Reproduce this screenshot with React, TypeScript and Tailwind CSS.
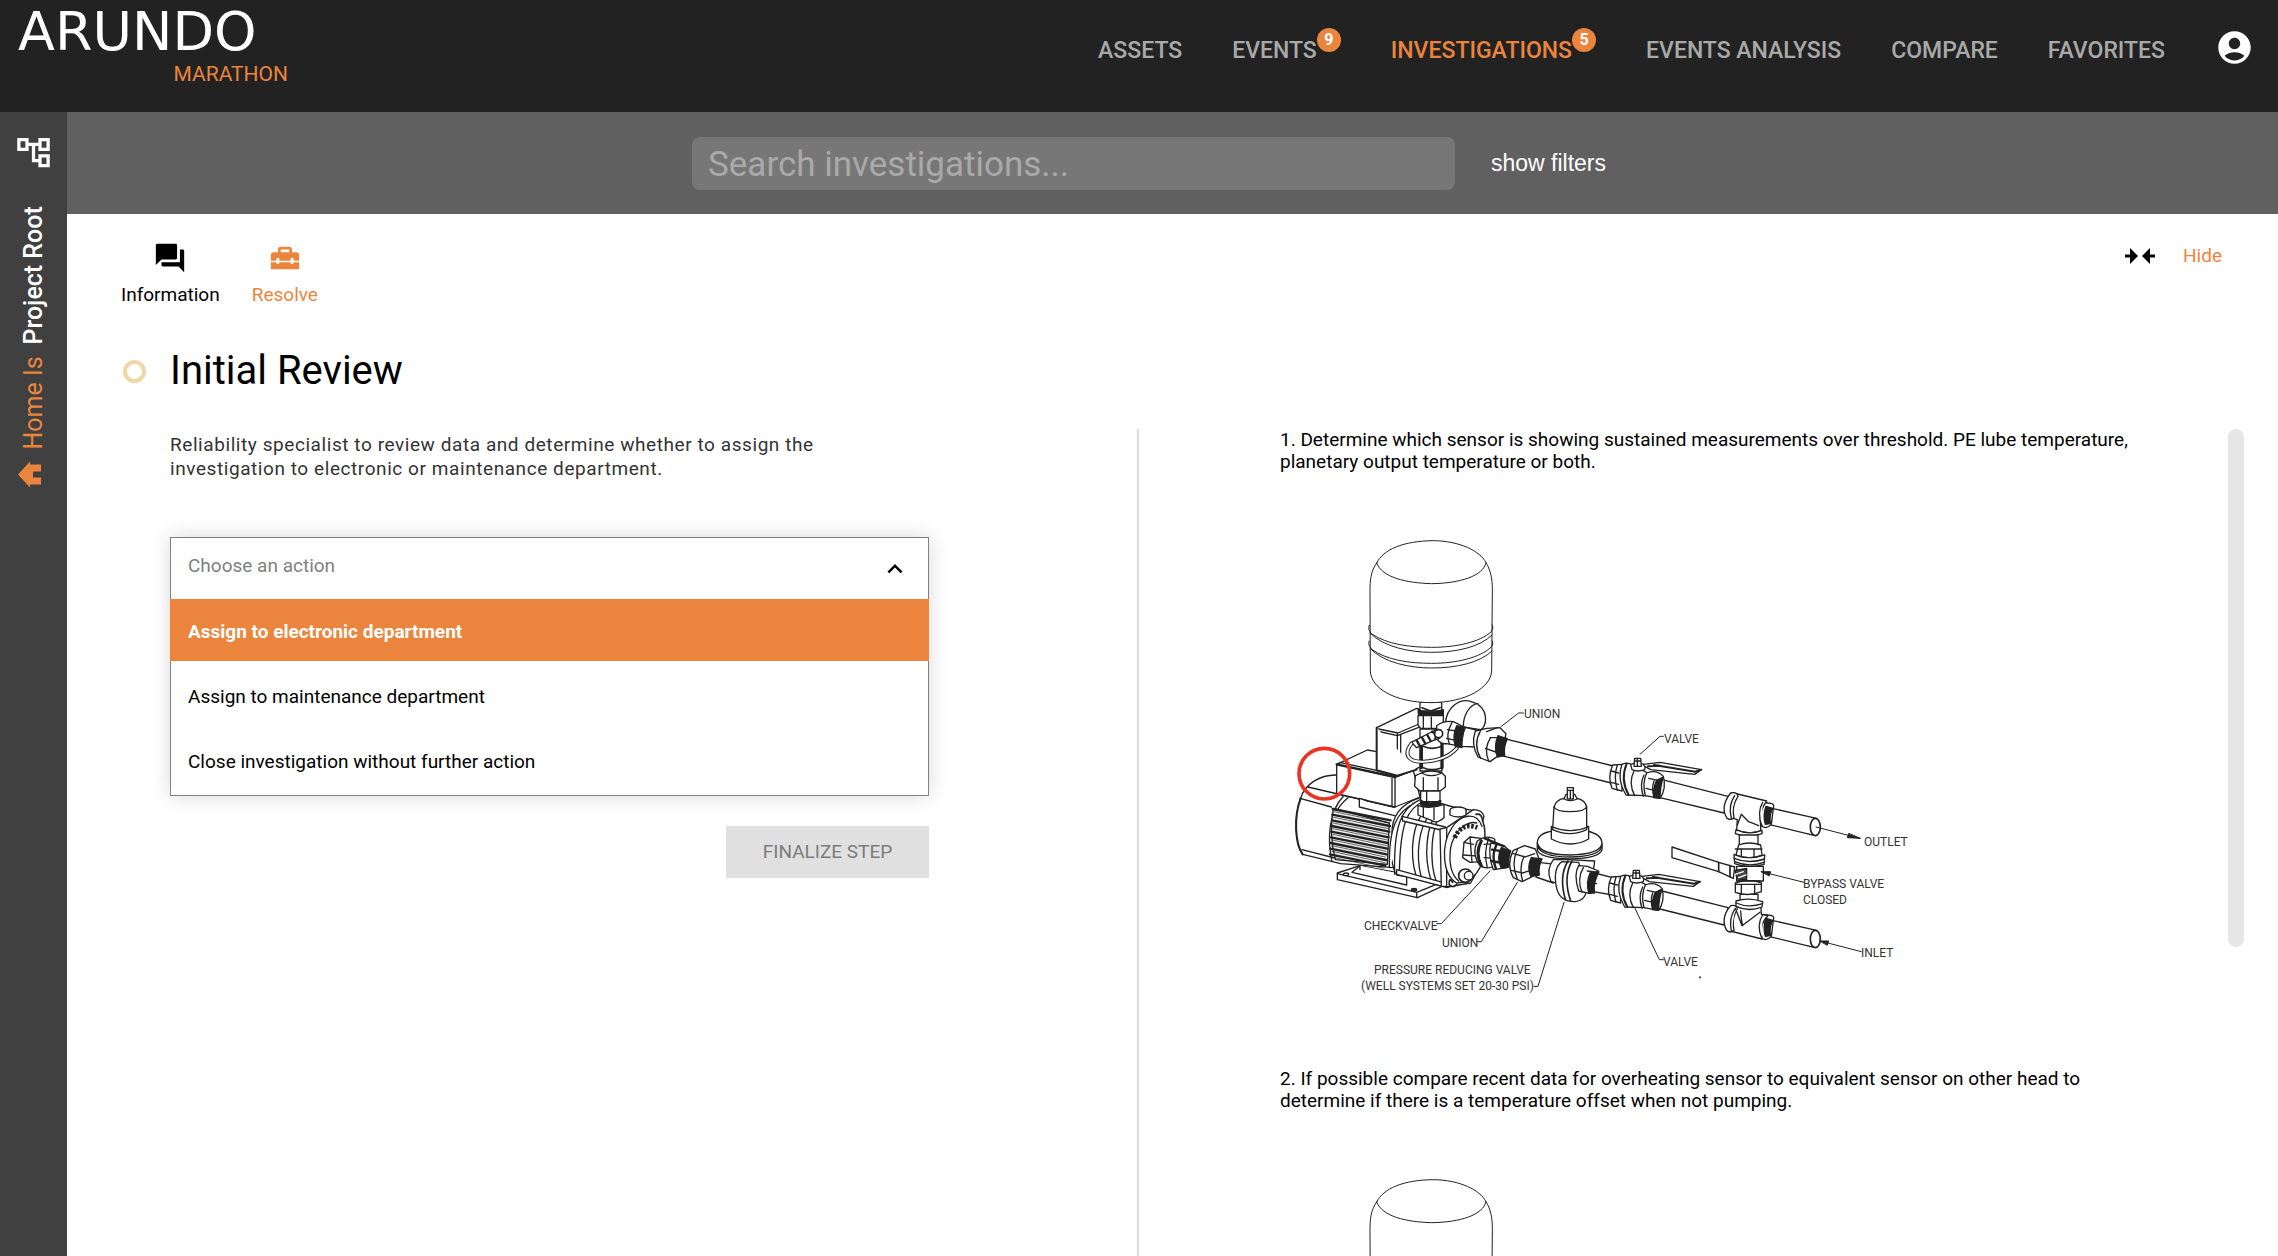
import React, { useState } from "react";
import {
  MdAccountCircle,
  MdForum,
  MdHomeRepairService,
  MdKeyboardArrowUp,
  MdOutlineAccountTree,
} from "react-icons/md";

type NavItem = {
  label: string;
  badge?: number;
  active?: boolean;
};

const navItems: NavItem[] = [
  { label: "ASSETS" },
  { label: "EVENTS", badge: 9 },
  { label: "INVESTIGATIONS", badge: 5, active: true },
  { label: "EVENTS ANALYSIS" },
  { label: "COMPARE" },
  { label: "FAVORITES" },
];

const actions = [
  "Assign to electronic department",
  "Assign to maintenance department",
  "Close investigation without further action",
];

const instructions = [
  {
    text: "1. Determine which sensor is showing sustained measurements over threshold. PE lube temperature, planetary output temperature or both.",
    labelled: true,
  },
  {
    text: "2. If possible compare recent data for overheating sensor to equivalent sensor on other head to determine if there is a temperature offset when not pumping.",
    labelled: false,
  },
];

const labels = [
  { x: 244, y: 197, text: "UNION" },
  { x: 384, y: 222, text: "VALVE" },
  { x: 584, y: 325, text: "OUTLET" },
  { x: 523, y: 367, text: "BYPASS VALVE" },
  { x: 523, y: 383, text: "CLOSED" },
  { x: 581, y: 436, text: "INLET" },
  { x: 383, y: 445, text: "VALVE" },
  { x: 84, y: 409, text: "CHECKVALVE" },
  { x: 162, y: 426, text: "UNION" },
  { x: 94, y: 453, text: "PRESSURE REDUCING VALVE" },
  { x: 81, y: 469, text: "(WELL SYSTEMS SET 20-30 PSI)" },
];

const fins = [0, 1, 2, 3, 4, 5, 6, 7, 8];

// Ball valve with its lever, used on both pipe runs
const BallValve = () => (
  <g>
    <path d="M338 192 L366 190 L366 270 L336 262 Q322 228 338 192 Z" />
    <path d="M334 210 L356 216 M333 244 L356 250 M352 192 Q340 228 352 268" />
    <path d="M366 190 Q384 182 396 192 L440 214 L440 284 L378 282 Q350 236 366 190 Z" />
    <path d="M380 188 Q360 236 386 282" strokeWidth="6" />
    <path d="M402 210 Q384 246 404 284 M432 222 Q418 250 430 286" />
    <path d="M440 216 Q470 204 490 226 Q500 262 480 292 L436 284 Q426 246 440 216 Z" />
    <path d="M446 232 L474 238 M438 262 L462 268 M462 240 Q454 262 462 290" />
    <path d="M470 238 L490 228 Q480 258 480 292 L462 290 Q458 262 470 238 Z" fill="#222" />
    <path d="M392 190 L396 206 Q414 214 434 206 L436 192 Q414 182 392 190 Z" />
    <path d="M404 172 L422 172 L424 196 L402 196 Z" />
    <path d="M404 180 L422 180 M412 172 V196" />
    <path d="M430 190 L480 184 L604 206 L584 220 L452 206 L434 196 Z" />
    <path d="M462 192 L586 212 M586 212 L604 206 M444 196 L480 194" strokeWidth="6" />
  </g>
);

// Short open pipe with the collar of the tee on its left side
const OpenPipe = () => (
  <g>
    <path d="M806 320 L950 352 L942 403 L806 370 Z" />
    <ellipse cx="946" cy="378" rx="15" ry="26" strokeWidth="5" />
    <path d="M804 306 Q826 306 820 322 L814 370 Q800 386 786 376 L774 340 L788 304 Z" />
    <path d="M798 316 L818 322 Q806 346 812 368 L796 370 Q788 342 798 316 Z" fill="#222" />
  </g>
);

const PumpDiagram = ({ labelled }: { labelled: boolean }) => (
  <svg
    viewBox="0 0 650 480"
    className="block w-[650px] h-[480px] max-w-full"
    role="img"
    aria-label="Pump assembly diagram"
  >
    <g
      transform="scale(0.33333)"
      fill="#fff"
      stroke="#222"
      strokeWidth="4"
      strokeLinejoin="round"
      strokeLinecap="round"
    >
      {/* upper pipe run */}
      <g transform="translate(660 540)">
        <path d="M10 112 L340 195 L334 246 L5 164 Z" />
        <path d="M486 236 L684 286 L672 336 L480 290 Z" />
        <BallValve />
        <OpenPipe />
        <path d="M700 276 L800 300 Q776 330 782 376 L782 390 Q746 402 710 388 L712 356 L692 350 Z" />
        <path d="M692 276 Q712 272 714 286 Q694 316 702 350 Q690 360 680 350 Q660 316 692 276 Z" />
        <path d="M704 284 Q684 314 694 352 M724 340 L712 372 M724 340 L746 362 L776 374 M788 304 Q770 334 786 376" />
        <path d="M708 386 Q746 404 786 388 L786 398 Q746 414 706 398 Z" />
      </g>

      {/* bypass branch */}
      <g transform="translate(660 540)">
        <path d="M718 402 H774 V440 H718 Z" />
        <path d="M720 580 H774 V612 H720 Z" />
        <path d="M716 432 Q746 420 782 432 L786 462 Q746 478 708 462 Z" />
        <path d="M706 444 H786 M724 446 V470 M762 446 V470" />
        <path d="M702 460 Q746 480 794 462 L792 490 Q746 504 704 488 Z" />
        <path d="M702 472 Q746 490 794 474 M704 482 Q746 500 792 484" />
        <path d="M710 496 H790 V540 H710 Z" />
        <path d="M516 438 L656 484 L704 498 L700 532 L656 512 L516 470 Z" />
        <path d="M656 484 V512 M690 494 V528" strokeWidth="5" />
        <path d="M704 508 L740 502 L740 536 L712 534 Z" fill="#444" />
        <path d="M706 520 L730 512 M716 530 L738 522" stroke="#fff" />
        <path d="M706 546 Q746 532 784 546 V572 Q746 588 706 574 Z" />
        <path d="M706 550 H784 M724 550 V580 M764 550 V580 M712 540 H780" />
      </g>

      {/* lower pipe run */}
      <g transform="translate(660 540)">
        <path d="M284 516 L346 532 L338 582 L280 572 Z" />
        <path d="M486 570 L684 620 L672 672 L480 624 Z" />
        <g transform="translate(-4 336)">
          <BallValve />
        </g>
        <g transform="translate(0 336)">
          <OpenPipe />
        </g>
        <path d="M694 614 L712 616 L712 604 H782 L784 640 L804 644 Q776 670 786 714 L690 690 Z" />
        <path d="M692 614 Q712 610 712 626 Q694 650 702 688 Q690 698 680 688 Q660 652 692 614 Z" />
        <path d="M706 622 Q686 650 694 690 M708 626 L726 674 L780 634 M722 630 Q724 660 728 674 M788 642 Q768 672 786 714" />
        <path d="M708 600 Q746 588 788 602 L786 618 Q746 634 708 616 Z" />
        <path d="M708 606 Q746 622 788 608" />
      </g>

      {/* pressure reducing valve */}
      <g transform="translate(660 540)">
        <path d="M116 484 L166 490 L160 546 L108 528 Z" />
        <path d="M160 476 L204 476 L284 480 L280 510 L200 560 L152 540 Q138 506 160 476 Z" />
        <path d="M186 482 Q160 500 168 552 Q176 604 226 602 Q262 596 258 560 L236 484 Z" />
        <path d="M204 480 Q176 524 196 596 M216 480 Q188 530 212 600" strokeWidth="5" />
        <path d="M236 494 Q220 520 236 570 L272 578 L296 510 L262 496 Z" />
        <path d="M250 500 Q230 534 246 574 M262 510 L296 514 M262 544 L290 548" />
        <path d="M270 516 L296 512 Q278 544 284 576 L266 576 Q258 544 270 516 Z" fill="#222" />
        <path d="M112 426 Q112 396 160 390 H262 Q306 400 306 428 V446 Q300 472 210 474 Q116 472 112 446 Z" />
        <path d="M112 426 Q120 462 210 462 Q300 460 306 428 M112 434 Q122 468 210 468 Q300 466 306 436" strokeWidth="4" />
        <path d="M154 376 H266 V414 Q212 444 154 414 Z" />
        <path d="M162 318 Q168 296 192 292 H232 Q256 298 260 318 V386 Q210 410 158 386 Z" />
        <path d="M162 318 Q168 332 210 332 Q254 332 260 318 M158 378 Q210 400 264 378" />
        <path d="M198 280 H224 L232 294 Q210 304 192 294 Z" />
        <path d="M202 260 H220 V294 H202 Z M202 268 H220 M211 270 V294" />
      </g>

      {/* motor and base */}
      <g transform="translate(0 540)">
        <path d="M240 494 L172 516 V536 L412 590 L486 556 L484 540 L380 520 Z" />
        <path d="M172 518 L410 574 L484 544 M410 574 V590 M240 494 L216 514 L380 552 V522 M240 494 V506" />
        <ellipse cx="198" cy="520" rx="8" ry="4" />
        <ellipse cx="402" cy="566" rx="8" ry="4" fill="#333" />
        <path d="M172 222 C120 220 74 250 62 292 C40 350 46 430 68 460 L182 488 L340 500 L420 300 L250 240 Z" />
        <path d="M62 292 C40 350 46 430 68 460" strokeWidth="6" />
        <path d="M60 292 L154 318 M84 258 L340 318 M66 446 L176 474 M190 286 C148 330 140 410 156 482 M204 290 C168 320 156 350 156 400" />
        <path d="M160 322 L328 366 L322 490 L166 476 Q146 400 160 322 Z" fill="#eee" />
        {fins.map((i) => (
          <path
            key={i}
            d={`M${158 - i} ${324 + i * 17} L${332 - i * 2} ${358 + i * 17}`}
            strokeWidth="7"
          />
        ))}
        {fins.map((i) => (
          <path
            key={i}
            d={`M${162 - i} ${332 + i * 17} L${328 - i * 2} ${366 + i * 17}`}
            strokeWidth="2"
          />
        ))}
        <path d="M170 190 L262 147 L290 152 L400 208 L420 288 L345 318 L170 278 Z" />
        <path d="M170 190 V278 L345 318 V228 Z" />
        <path d="M170 190 L345 228 L408 204" strokeWidth="7" />
        <path d="M336 232 V314 M178 184 L345 220" />
        <path d="M238 292 V318 L344 344 M238 292 L260 298" />
        <path d="M290 80 L410 22 L440 30 V190 L352 226 L290 208 Z" />
        <path d="M352 98 L352 226 M362 100 V222 M290 90 L352 104 L430 74 M296 84 L354 96 L424 66" />
        <path d="M290 80 V208 L352 224 L410 206" strokeWidth="6" />
      </g>

      {/* pump housing */}
      <g transform="translate(0 540)">
        <path d="M420 290 C360 310 334 350 336 400 C330 460 336 500 350 522 L390 528 L500 560 L560 540 L612 480 L614 380 L600 332 L520 318 Z" />
        <path d="M420 296 C366 320 340 370 344 520 M434 300 C384 320 360 360 358 522 M404 306 C354 330 326 372 328 500" />
        <path d="M436 330 C400 360 386 450 408 524 M450 340 C416 380 406 460 424 530" />
        <path d="M474 334 C438 370 430 470 454 540 M490 330 C452 370 446 480 470 546" strokeWidth="4" />
        <path d="M366 346 L496 378 L496 390 L368 360 Z M350 506 L488 544 L488 556 L350 520 Z" />
        <path d="M480 384 L500 380 V556 L484 556 Z" />
        <path d="M500 380 L580 326 Q606 326 612 346 L608 360 C622 400 614 470 586 520 L572 546 L500 558 Z" />
        <path d="M606 376 C590 330 540 340 516 380 C482 430 486 520 530 546 C580 546 612 500 614 440" />
        <path d="M590 366 C556 356 520 400 512 440 C506 486 512 520 536 540" />
        <path d="M524 410 Q546 362 592 380" strokeWidth="14" strokeDasharray="8 5" strokeLinecap="butt" />
        <ellipse cx="534" cy="328" rx="24" ry="10" />
        <path d="M510 328 V342 Q534 354 558 342 V328" />
        <path d="M518 544 Q506 526 508 552 Q520 562 530 550 M588 340 Q606 336 608 360" strokeWidth="5" />
        <circle cx="556" cy="524" r="20" strokeWidth="5" />
        <circle cx="566" cy="524" r="13" strokeWidth="4" />

        {/* check valve and union on the outlet */}
        <path d="M552 424 L570 408 L604 412 L606 482 L570 484 L548 470 Z" />
        <path d="M570 408 L576 484 M552 424 L580 430 M550 462 L604 466" />
        <path d="M592 420 Q620 400 644 414 L650 492 Q620 508 600 494 Q574 460 592 420 Z" />
        <path d="M604 420 Q584 456 604 494" strokeWidth="9" />
        <path d="M612 430 L650 428 M612 470 L650 472 M626 412 Q610 456 622 500" />
        <path d="M632 426 L672 434 L690 450 L682 500 L640 506 Q624 464 632 426 Z" />
        <path d="M650 430 Q632 464 648 504 M614 412 L672 436 M636 446 L674 452 M634 480 L668 486" strokeWidth="7" />
        <path d="M664 440 L692 450 Q680 476 686 498 L664 502 Q648 470 664 440 Z" fill="#222" />
        <path d="M700 448 L734 434 L766 444 L776 470 L770 520 L726 542 L700 530 Q678 490 700 448 Z" />
        <path d="M712 446 Q692 488 712 534 M732 466 Q716 500 728 540 M700 458 L736 468 L764 458 M694 508 L728 516 L752 508" strokeWidth="4" />
        <path d="M754 470 L786 474 Q774 498 778 522 L752 526 Q740 498 754 470 Z" fill="#222" />
      </g>

      {/* riser between the pump and the tank */}
      <g transform="translate(-60 -30)">
        <path d="M556 640 C558 590 600 556 640 574 C690 590 680 650 662 656 Z" />
        <path d="M610 646 C610 610 630 580 654 578" />
        <path d="M480 574 H545 V600 H480 Z" />
        <path d="M486 590 L512 600 L540 590" strokeWidth="5" />
        <path d="M474 596 Q510 612 550 596 V616 Q510 628 476 614 Z" fill="#222" />
        <path d="M474 614 H550 V644 L540 652 H482 L474 642 Z" />
        <path d="M490 616 V650 M514 618 V652" />
        <path d="M480 654 H546 V780 H480 Z" />
        <path d="M484 690 V770 M546 680 V770" strokeWidth="10" />
        <path d="M530 644 Q552 628 580 632 L612 648 L604 706 L560 698 Q540 700 530 682 Z" />
        <path d="M612 648 L662 660 L650 708 L604 706 Z" />
        <path d="M562 656 L590 660 M560 682 L586 688 M576 634 Q556 670 568 698" strokeWidth="4" />
        <path d="M590 644 L616 650 Q602 680 606 710 L586 706 Q576 676 590 644 Z" fill="#222" />
        <path d="M454 694 L520 660 Q540 648 546 668 Q544 684 526 686 L470 710 Z" />
        <path d="M470 688 L480 706 M486 680 L496 698 M502 672 L512 690 M516 662 Q530 668 526 684" strokeWidth="7" />
        <circle cx="536" cy="668" r="12" strokeWidth="5" />
        <path d="M454 698 C430 730 444 754 490 752 C540 750 570 734 590 712" fill="none" strokeWidth="12" />
        <path d="M454 698 C430 730 444 754 490 752 C540 750 570 734 590 712" fill="none" stroke="#fff" strokeWidth="6" />
        <path d="M490 706 Q514 718 546 706 M490 770 Q514 782 546 770" strokeWidth="5" />
        <path d="M646 660 L680 652 L720 650 L738 668 L726 726 L690 752 L654 738 Q632 700 646 660 Z" />
        <path d="M662 658 Q638 700 662 742 M680 662 L712 650 M690 680 L738 680 M676 712 L716 726 M692 680 Q670 712 686 750" strokeWidth="4" />
        <path d="M714 674 L742 684 Q730 708 734 734 L712 738 Q700 706 714 674 Z" fill="#222" />
        <path d="M484 786 Q512 774 546 786 V800 H484 Z" />
        <path d="M466 794 L484 786 Q512 802 546 786 L556 796 V828 L540 840 H480 L464 826 Z" />
        <path d="M490 800 V838 M534 800 V838" />
        <path d="M482 840 H540 V872 H482 Z M500 842 V870" />
        <path d="M482 868 Q510 884 542 868 V882 Q510 894 482 882 Z" fill="#222" />
        <path d="M474 884 Q510 896 552 880 V920 Q528 940 514 928 L474 912 Z" />
        <path d="M490 886 V918 M522 890 V926" />
      </g>

      {/* tank */}
      <g transform="translate(-60 -30)" strokeWidth="3">
        <path d="M350 156 C332 180 330 210 330 240 L331 480 C333 530 400 574 513 575 C620 574 692 530 695 480 L697 240 C698 200 690 175 678 155 C660 120 600 90 520 89 C430 90 370 115 350 156 Z" />
        <path d="M350 156 C366 200 440 216 515 218 C600 217 670 195 678 155" fill="none" />
        <path d="M327 343 Q322 355 334 368 C380 400 450 409 515 409 C590 409 660 393 694 362 Q702 350 697 342 M330 366 C370 408 450 424 515 424 C590 424 660 408 696 372" fill="none" />
        <path d="M327 390 Q322 400 334 414 C380 448 450 457 515 457 C590 457 660 440 694 408 Q702 398 697 390 M330 412 C370 455 450 471 515 471 C590 471 660 455 696 420" fill="none" />
      </g>

      {/* leader lines */}
      <g transform="translate(660 540)" fill="none" strokeWidth="3">
        <path d="M70 36 L56 36 L4 76 M490 106 L480 106 L420 160 M404 620 L478 776 L490 776 M192 604 L114 856 L102 856" />
        <path d="M948 378 L1080 412 M912 544 L784 512 M1084 752 L960 720 M52 544 L-56 722 L-68 722 M-30 510 L-176 668 L-190 668" />
        <path d="M1080 412 L1042 410 L1046 398 Z M784 512 L812 512 L808 524 Z M960 720 L986 720 L982 732 Z" fill="#222" />
        <path d="M600 828 V830" strokeWidth="5" />
      </g>

      <circle cx="133" cy="758" r="76" fill="none" stroke="#ea3323" strokeWidth="11" />
    </g>
    {labelled && (
      <g fill="#333" fontSize="12" fontFamily="Roboto, sans-serif">
        {labels.map((l) => (
          <text key={`${l.text}-${l.x}`} x={l.x} y={l.y}>
            {l.text}
          </text>
        ))}
      </g>
    )}
  </svg>
);

const Header = () => (
  <header className="flex items-start justify-between h-28 bg-[#222222] pl-[18px] pr-6">
    <a href="#home" className="flex flex-col items-start w-[270px]">
      <span className="font-['DejaVu_Sans',sans-serif] text-[54px] leading-[64px] text-white">
        ARUNDO
      </span>
      <span className="self-end text-[21px] leading-5 text-[#eb853d]">MARATHON</span>
    </a>
    <nav className="flex items-start gap-[50px] pt-7">
      {navItems.map((item) => (
        <a
          key={item.label}
          href="#nav"
          className={`flex items-start text-[23px] leading-[46px] font-medium ${
            item.active ? "text-[#eb853d]" : "text-[#a9a9a9]"
          }`}
        >
          {item.label}
          {item.badge && (
            <span className="flex items-center justify-center size-6 rounded-full bg-[#eb853d] text-base font-bold text-white">
              {item.badge}
            </span>
          )}
        </a>
      ))}
      <button type="button" aria-label="Account" className="text-white">
        <MdAccountCircle size={39} />
      </button>
    </nav>
  </header>
);

const Sidebar = () => (
  <aside className="flex flex-col items-center w-[67px] shrink-0 bg-[#404040] pt-[21px]">
    <button type="button" aria-label="Asset tree" className="text-white">
      <MdOutlineAccountTree size={39} />
    </button>
    <div className="flex items-start gap-3 mt-[34px] rotate-180 [writing-mode:vertical-rl] text-[25px] leading-8">
      <svg viewBox="0 0 24 26" className="w-6 h-[26px] rotate-180 fill-[#eb853d]">
        <path d="M0 13 L12 0 V3 H23 V10 H15 V16 H23 V23 H12 V26 Z" />
      </svg>
      <a href="#home-root" className="text-[#eb853d]">
        Home Is
      </a>
      <span className="font-medium text-white">Project Root</span>
    </div>
  </aside>
);

const App: React.FC = () => {
  const [selected, setSelected] = useState("");
  const [highlighted, setHighlighted] = useState(0);

  return (
    <div className="flex flex-col h-screen overflow-hidden bg-white font-[Roboto,sans-serif] text-black">
      <Header />
      <div className="flex flex-1 min-h-0">
        <Sidebar />
        <div className="flex flex-col flex-1 min-w-0">
          <div className="flex items-center h-[102px] shrink-0 bg-[#606060] pl-[625px] gap-9">
            <input
              type="text"
              aria-label="Search investigations"
              placeholder="Search investigations..."
              className="w-[763px] h-[53px] rounded-lg bg-[#777777] px-4 pt-0.5 text-[35px] text-white placeholder-[#a9a9a9] outline-none"
            />
            <button
              type="button"
              className="font-['Liberation_Sans',sans-serif] text-[23px] text-white"
            >
              show filters
            </button>
          </div>

          <main className="flex flex-col flex-1 min-h-0">
            <div className="flex items-start justify-between pl-[54px] pr-14 pt-[27px] text-[19px] leading-6">
              <div className="flex gap-8">
                <button type="button" className="flex flex-col items-center gap-2">
                  <MdForum size={34} />
                  Information
                </button>
                <button
                  type="button"
                  className="flex flex-col items-center gap-2 text-[#eb853d]"
                >
                  <MdHomeRepairService size={34} />
                  Resolve
                </button>
              </div>
              <div className="flex items-center gap-7 pt-[3px]">
                <button type="button" aria-label="Collapse">
                  <svg viewBox="0 0 30 16" className="w-[30px] h-4">
                    <path d="M0 6.5 H5 V0 L13 8 L5 16 V9.5 H0 Z M30 6.5 H25 V0 L17 8 L25 16 V9.5 H30 Z" />
                  </svg>
                </button>
                <button type="button" className="text-[#eb853d]">
                  Hide
                </button>
              </div>
            </div>

            <div className="flex items-center gap-6 pl-14 mt-10">
              <span className="size-[23px] rounded-full border-4 border-[#f0d7a7]" />
              <h1 className="text-[40px] leading-[48px]">Initial Review</h1>
            </div>

            <div className="flex flex-1 min-h-0 pt-[34px]">
              <section className="w-[1072px] pl-[103px] border-r-2 border-[#dcdcdc]">
                <p className="w-[680px] pt-1 text-[19px] leading-6 tracking-[0.03em] text-[#333333]">
                  Reliability specialist to review data and determine whether to
                  assign the investigation to electronic or maintenance
                  department.
                </p>

                <div className="w-[759px] mt-14 border border-[#808080] bg-white pb-1 shadow-[0_0_20px_rgba(0,0,0,0.15)]">
                  <div className="flex items-center h-[61px] pl-[17px] pr-[18px] pb-1">
                    <select
                      aria-label="Choose an action"
                      value={selected}
                      onChange={(e) => setSelected(e.target.value)}
                      className="flex-1 appearance-none bg-transparent text-[19px] text-[#808080] outline-none"
                    >
                      <option value="">Choose an action</option>
                      {actions.map((a) => (
                        <option key={a}>{a}</option>
                      ))}
                    </select>
                    <MdKeyboardArrowUp size={30} className="mt-1" />
                  </div>
                  <ul className="flex flex-col gap-[3px] -mx-px">
                    {actions.map((a, i) => (
                      <li key={a}>
                        <button
                          type="button"
                          onMouseEnter={() => setHighlighted(i)}
                          onClick={() => setSelected(a)}
                          className={`w-full h-[62px] pl-[18px] pt-1 text-left text-[19px] ${
                            i === highlighted
                              ? "bg-[#eb853d] font-bold text-white"
                              : "text-black"
                          }`}
                        >
                          {a}
                        </button>
                      </li>
                    ))}
                  </ul>
                </div>

                <div className="flex justify-end w-[759px] mt-[30px]">
                  <button
                    type="button"
                    className="h-[52px] w-[203px] bg-[#e0e0e0] text-[19px] text-[#7c7c7c]"
                  >
                    FINALIZE STEP
                  </button>
                </div>
              </section>

              <section className="flex flex-1 justify-between pl-[141px] pr-[34px]">
                <div className="w-[870px] overflow-hidden">
                  {instructions.map((step) => (
                    <article key={step.text} className="h-[639px]">
                      <p className="text-[19px] leading-[22px]">{step.text}</p>
                      <div className="mt-12">
                        <PumpDiagram labelled={step.labelled} />
                      </div>
                    </article>
                  ))}
                </div>
                <div className="w-4 h-[518px] rounded-full bg-[#e6e6e6]" />
              </section>
            </div>
          </main>
        </div>
      </div>
    </div>
  );
};

export default App;
